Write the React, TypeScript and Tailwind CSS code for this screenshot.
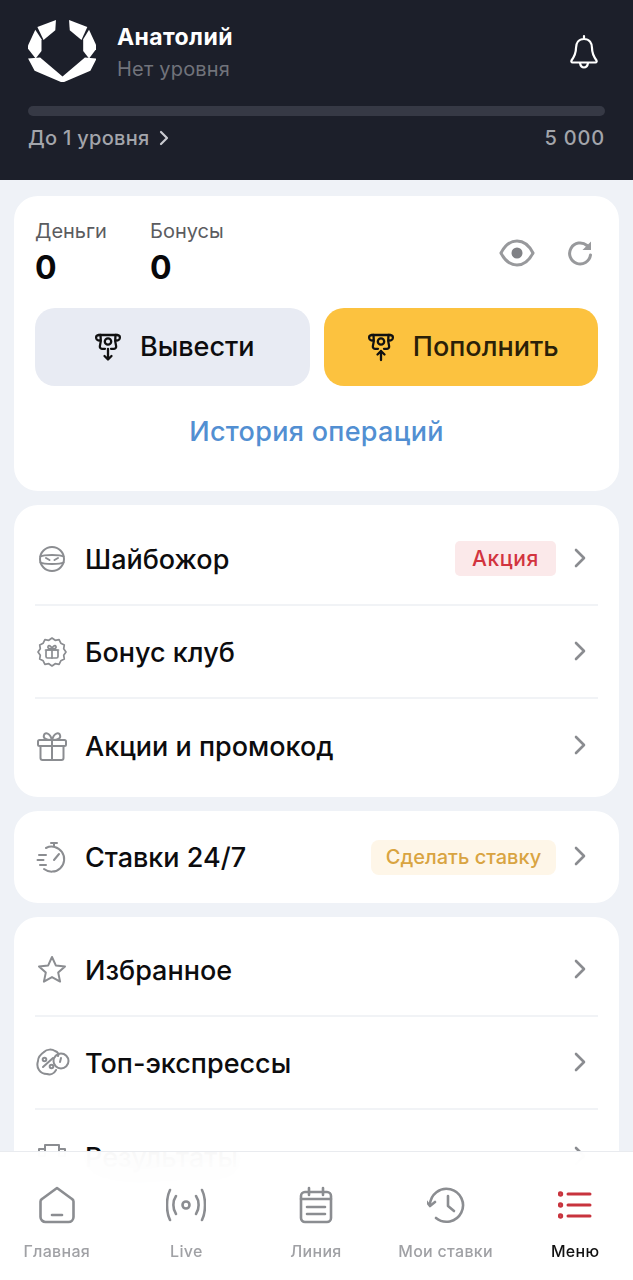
import React from "react";

const F = "font-['Inter','Noto_Sans',sans-serif]";

function Chevron() {
  return (
    <svg width="14" height="20" viewBox="0 0 14 20" fill="none" stroke="#8a8c90" strokeWidth="2.6" strokeLinecap="round" strokeLinejoin="round" className="mb-[2px] shrink-0">
      <path d="M3 2l8 8-8 8" />
    </svg>
  );
}

function Logo() {
  return (
    <svg width="68" height="62" viewBox="25 20 197 180" fill="#fff" className="shrink-0">
      <polygon points="106,20 104,50 70,78 52,40" />
      <polygon points="46,48 64,76 64,110 47,132 22,100" />
      <polygon points="25,132 60,129 125,184 190,129 224,132 206,167 125,202 44,167" />
      <polygon points="202,48 185,76 185,110 202,132 226,100" />
      <polygon points="144,20 146,50 180,78 197,40" />
    </svg>
  );
}

function Atm({ up }: { up?: boolean }) {
  return (
    <svg width="26" height="29" viewBox="0 0 26 29" fill="none" stroke="#111" strokeWidth="2.300" strokeLinecap="round" strokeLinejoin="round" className="shrink-0">
      <path d="M4 2h18" />
      <path d="M4 2C1.500 2 .8 3.500 1.300 5.500c.4 1.300 1.700 2 3.200 2" />
      <path d="M22 2c2.500 0 3.200 1.500 2.700 3.500-.4 1.300-1.700 2-3.200 2" />
      <path d="M5.500 2c.6 4 .4 8-.6 11-.3 1.500.5 2.800 2 2.800H10" />
      <path d="M20.500 2c-.6 4-.4 8 .6 11 .3 1.500-.5 2.800-2 2.800H16" />
      <circle cx="13" cy="8.500" r="3.200" />
      {up ? <path d="M13 27V18M9.500 21.500L13 18l3.500 3.500" /> : <path d="M13 16v10.500M9.500 23L13 26.500l3.500-3.500" />}
    </svg>
  );
}

const iconProps = {
  width: 32,
  height: 32,
  viewBox: "0 0 32 32",
  fill: "none",
  stroke: "#8b8d91",
  strokeWidth: 2,
  strokeLinecap: "round" as const,
  strokeLinejoin: "round" as const,
};

function Ninja() {
  return (
    <svg {...iconProps}>
      <circle cx="16" cy="16" r="12" />
      <path d="M4.500 13.500C8 11.500 24 11.500 27.500 13.500M4.500 19.500C8 21.500 24 21.500 27.500 19.500" />
      <path d="M10 15l3.500 2M22 15l-3.500 2" />
    </svg>
  );
}
function BonusBadge() {
  return (
    <svg {...iconProps} strokeWidth={1.7}>
      <path d="M16 2l3.200 2.300 3.900-.6 1.700 3.500 3.500 1.700-.6 3.900L30 16l-2.300 3.200.6 3.900-3.500 1.700-1.700 3.500-3.900-.6L16 30l-3.200-2.300-3.900.6-1.700-3.500-3.500-1.700.6-3.900L2 16l2.300-3.200-.6-3.900 3.500-1.700 1.700-3.500 3.900.6z" />
      <rect x="10" y="14" width="12" height="8" rx="1.500" />
      <path d="M9.500 14h13M16 14v8M16 13c-3.500 0-4.500-1.200-4-2.500.6-1.300 3-1.200 4 2.500zM16 13c3.500 0 4.500-1.200 4-2.500-.6-1.300-3-1.200-4 2.500z" />
    </svg>
  );
}
function Gift() {
  return (
    <svg {...iconProps}>
      <rect x="2" y="10" width="28" height="6" rx="1.500" />
      <path d="M4.500 16v12a2 2 0 002 2h19a2 2 0 002-2V16M16 10v20" />
      <path d="M16 10c-7 0-9-2-8-5 1-3 6-2.500 8 5zM16 10c7 0 9-2 8-5-1-3-6-2.500-8 5z" />
    </svg>
  );
}
function Stopwatch() {
  return (
    <svg {...iconProps}>
      <path d="M10 7a12.500 12.500 0 11-2 21" />
      <path d="M15 2h6M18 2v3M3 14h7M1.500 19h6M4 24h6" />
      <path d="M18 19l5-6" />
    </svg>
  );
}
function Star() {
  return (
    <svg {...iconProps}>
      <path d="M16 3l3.800 8.400 9.200 1-6.800 6.200 1.900 9L16 23.100 7.900 27.600l1.900-9L3 12.400l9.200-1z" />
    </svg>
  );
}
function TopExpress() {
  return (
    <svg width="34" height="32" viewBox="0 0 34 32" fill="none" stroke="#8b8d91" strokeWidth="2" strokeLinecap="round" strokeLinejoin="round">
      <path d="M8 5c3-3 8-3 11-1 3 1 4 3 3 5M20 23c-2 4-6 5-9 4-3 0-6-1-8-4-2-3-2-6-1-9 0-4 3-7 6-9" />
      <path d="M7 20L17 11" />
      <circle cx="8.500" cy="12.500" r="1.800" />
      <circle cx="15.500" cy="19.500" r="1.800" />
      <circle cx="25" cy="14" r="7.500" />
      <path d="M25 11l-1 4" />
    </svg>
  );
}
function Printer() {
  return (
    <svg {...iconProps}>
      <path d="M9 10V4h14v6M3 8h6v7H3zM23 8h6v7h-6z" />
    </svg>
  );
}

function Row({ icon, label, badge, divider }: { icon: React.ReactNode; label: string; badge?: React.ReactNode; divider?: boolean }) {
  return (
    <div className={`flex h-[93px] items-center ${divider ? "border-b-2 border-[#f1f3f6]" : ""}`}>
      <div className="flex w-[50px] shrink-0 justify-start pl-[1px]">{icon}</div>
      <span className="pt-[3px] text-[27px] font-medium text-[#0c0c0e]">{label}</span>
      <div className="ml-auto flex items-center gap-[17px] pr-[11px]">
        {badge}
        <Chevron />
      </div>
    </div>
  );
}

function Tab({ icon, label, active }: { icon: React.ReactNode; label: string; active?: boolean }) {
  return (
    <div className="flex flex-col items-center">
      <div className="flex h-[40px] items-center justify-center">{icon}</div>
      <span className={`mt-[14px] text-[16px] font-medium tracking-[0.3px] whitespace-nowrap ${active ? "text-[#111]" : "text-[#a0a1a5]"}`}>{label}</span>
    </div>
  );
}

const tabIcon = { fill: "none", stroke: "#8b8d91", strokeWidth: 2.6, strokeLinecap: "round" as const, strokeLinejoin: "round" as const };

export default function App() {
  return (
    <div className={`relative h-[1280px] w-[633px] overflow-hidden bg-[#eff2f7] ${F}`}>
      <header className="flex h-[180px] flex-col bg-[#1c1f2a] px-[28px] pt-[20px]">
        <div className="flex items-start">
          <Logo />
          <div className="ml-[21px] flex flex-col">
            <span className="text-[23px] leading-[34px] font-bold tracking-[0.4px] text-white">Анатолий</span>
            <span className="text-[20px] leading-[30px] tracking-[0.2px] text-[#71737b]">Нет уровня</span>
          </div>
          <svg width="30" height="36" viewBox="0 0 30 36" fill="none" stroke="#fff" strokeWidth="2.200" strokeLinecap="round" strokeLinejoin="round" className="mt-[14px] mr-[6px] ml-auto">
            <path d="M15 2v3M15 5c-5.500 0-8 4-8 9 0 6-2 9-4.500 12.500-.5 1 0 2 1 2h23c1 0 1.500-1 1-2C25 23 23 20 23 14c0-5-2.500-9-8-9z" />
            <path d="M11 29c.5 3 2 4.500 4 4.500s3.500-1.500 4-4.500" />
          </svg>
        </div>
        <div className="mt-[22px] h-[10px] rounded-full bg-[#363945]" />
        <div className="mt-[7px] flex items-center justify-between text-[20px] font-medium text-[#a3a5ab]">
          <div className="flex items-center gap-[9px]">
            <span className="tracking-[0.3px]">До 1 уровня</span>
            <svg width="10" height="16" viewBox="0 0 10 16" fill="none" stroke="#c9cad0" strokeWidth="2.200" strokeLinecap="round" strokeLinejoin="round">
              <path d="M2 2l6 6-6 6" />
            </svg>
          </div>
          <span className="tracking-[0.8px]">5 000</span>
        </div>
      </header>

      <main className="flex flex-col gap-[14px] px-[14px] pt-[16px]">
        <section className="h-[295px] rounded-[24px] bg-white px-[21px] pt-[22px]">
          <div className="flex items-center">
            <div className="w-[115px]">
              <div className="text-[20px] leading-[26px] text-[#5b5c60]">Деньги</div>
              <div className="mt-[6px] text-[32px] leading-[36px] font-bold text-[#08080a]">0</div>
            </div>
            <div>
              <div className="text-[20px] leading-[26px] text-[#5b5c60]">Бонусы</div>
              <div className="mt-[6px] text-[32px] leading-[36px] font-bold text-[#08080a]">0</div>
            </div>
            <div className="mt-[2px] mr-[5px] ml-auto flex items-center gap-[32px]">
              <svg width="36" height="28" viewBox="0 0 36 28" fill="none" stroke="#98999c" strokeWidth="3">
                <path d="M2 14C6 6 11 2 18 2s12 4 16 12c-4 8-9 12-16 12S6 22 2 14z" />
                <circle cx="18" cy="14" r="5.500" fill="#808185" stroke="none" />
              </svg>
              <svg width="26" height="26" viewBox="0 0 26 26" fill="none" stroke="#98999c" strokeWidth="3" strokeLinecap="round">
                <path d="M20 5.500A10.500 10.500 0 1023.500 15" />
                <path d="M24 1.500v8.500h-8.500z" fill="#98999c" stroke="none" />
              </svg>
            </div>
          </div>
          <div className="mt-[22px] grid grid-cols-2 gap-[14px]">
            <button className="flex h-[78px] items-center justify-center gap-[19px] rounded-[20px] bg-[#e8ebf3] pl-[5px] text-[27px] font-medium text-[#0c0c0e]">
              <Atm />
              Вывести
            </button>
            <button className="flex h-[78px] items-center justify-center gap-[19px] rounded-[20px] bg-[#fcc23f] pl-[5px] text-[27px] font-medium text-[#2a2008]">
              <Atm up />
              Пополнить
            </button>
          </div>
          <div className="mt-[26px] text-center text-[27px] font-medium tracking-[0.3px] text-[#528fd2]">История операций</div>
        </section>

        <section className="rounded-[24px] bg-white px-[21px] pt-[8px] pb-[5px]">
          <Row
            icon={<Ninja />}
            label="Шайбожор"
            divider
            badge={<span className="flex h-[35px] w-[101px] items-center justify-center rounded-[5px] bg-[#fbe9ea] text-[21px] font-medium tracking-[0.6px] text-[#d2343f]">Акция</span>}
          />
          <Row icon={<BonusBadge />} label="Бонус клуб" divider />
          <Row icon={<Gift />} label="Акции и промокод" />
        </section>

        <section className="rounded-[24px] bg-white px-[21px]">
          <div className="h-[92px] [&>div]:h-[92px]">
            <Row
              icon={<Stopwatch />}
              label="Ставки 24/7"
              badge={<span className="flex h-[35px] w-[185px] items-center justify-center rounded-[8px] bg-[#fef6e8] text-[20px] font-medium text-[#d9a441]">Сделать ставку</span>}
            />
          </div>
        </section>

        <section className="rounded-[24px] bg-white px-[21px] pt-[7px] pb-[5px]">
          <Row icon={<Star />} label="Избранное" divider />
          <Row icon={<TopExpress />} label="Топ-экспрессы" divider />
          <Row icon={<Printer />} label="Результаты" />
        </section>
      </main>

      <nav className="absolute inset-x-0 bottom-0 h-[129px] border-t border-[#e9ebef] bg-white/95 pt-[33px] backdrop-blur-[16px]">
        <div className="-ml-[8px] grid w-[648px] grid-cols-5">
          <Tab
            label="Главная"
            icon={
              <svg width="38" height="38" viewBox="0 0 38 38" {...tabIcon}>
                <path d="M19 2L34 13a3 3 0 011.500 2.500V31a5 5 0 01-5 5H7.500a5 5 0 01-5-5V15.500A3 3 0 014 13z" />
                <path d="M14 29h10" />
              </svg>
            }
          />
          <Tab
            label="Live"
            icon={
              <svg width="40" height="34" viewBox="0 0 40 34" {...tabIcon}>
                <circle cx="20" cy="17" r="3.500" />
                <path d="M10 8c-3.500 5-3.500 13 0 18M30 8c3.500 5 3.500 13 0 18" />
                <path d="M4 2c-4 8-4 22 0 30M36 2c4 8 4 22 0 30" />
              </svg>
            }
          />
          <Tab
            label="Линия"
            icon={
              <svg width="34" height="38" viewBox="0 0 34 38" {...tabIcon}>
                <rect x="2" y="6" width="30" height="30" rx="4" />
                <path d="M2 13h30M10 2v7M24 2v7M8 21h18M8 28h18" />
              </svg>
            }
          />
          <Tab
            label="Мои ставки"
            icon={
              <svg width="38" height="38" viewBox="0 0 38 38" {...tabIcon}>
                <path d="M3 19A16.500 16.500 0 119 32" />
                <path d="M-1 15l4 5 5-4" />
                <path d="M21 10v10l6 5" />
              </svg>
            }
          />
          <Tab
            label="Меню"
            active
            icon={
              <svg width="34" height="30" viewBox="0 0 34 30" fill="none" stroke="#c8333d" strokeWidth="3" strokeLinecap="round">
                <path d="M10 4h22M10 15h22M10 26h22" />
                <circle cx="2.500" cy="4" r="1.200" />
                <circle cx="2.500" cy="15" r="1.200" />
                <circle cx="2.500" cy="26" r="1.200" />
              </svg>
            }
          />
        </div>
      </nav>
    </div>
  );
}
